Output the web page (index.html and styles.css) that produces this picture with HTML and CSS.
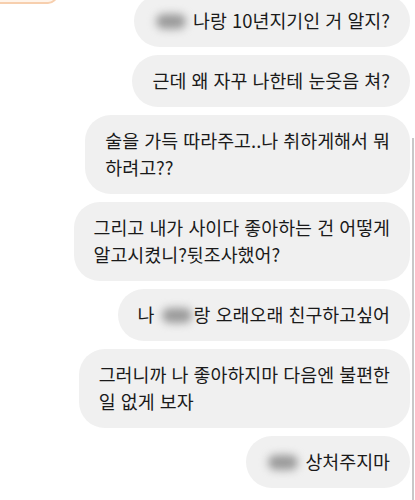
FILE: index.html
```html
<!DOCTYPE html>
<html lang="ko">
<head>
  <meta charset="UTF-8" />
  <meta name="viewport" content="width=device-width, initial-scale=1.0" />
  <title>대화</title>
  <link rel="stylesheet" href="styles.css">
</head>
<body>
  <div class="sticker"></div>
  <div class="scrollbar"></div>

  <main class="chat">
    <div class="bubble first"><span class="blur"></span> 나랑 10년지기인 거 알지?</div>
    <div class="bubble">근데 왜 자꾸 나한테 눈웃음 쳐?</div>
    <div class="bubble">술을 가득 따라주고..나 취하게해서 뭐<br>하려고??</div>
    <div class="bubble">그리고 내가 사이다 좋아하는 건 어떻게<br>알고시켰니?뒷조사했어?</div>
    <div class="bubble">나 <span class="blur"></span>랑 오래오래 친구하고싶어</div>
    <div class="bubble">그러니까 나 좋아하지마 다음엔 불편한<br>일 없게 보자</div>
    <div class="bubble"><span class="blur"></span> 상처주지마</div>
  </main>
</body>
</html>
```

FILE: styles.css
```css
body {
  font-family: "Noto Sans CJK KR", "Noto Sans", sans-serif;
  margin: 0;
  padding: 0;
  background: #fff;
  color: #1a1a1a;
  overflow: hidden;
}

.sticker {
  position: absolute;
  left: -10px;
  top: -30px;
  width: 64px;
  height: 30px;
  background: #fff4ea;
  border: 2px solid #f7cfae;
  border-radius: 10px;
}

.scrollbar {
  position: absolute;
  right: 1px;
  top: 138px;
  width: 2px;
  height: 362px;
  background: #c8c8c8;
}

.chat {
  display: flex;
  flex-direction: column;
  align-items: flex-end;
  gap: 8px;
  padding-right: 5px;
}

.bubble {
  background: #f0f0f0;
  border-radius: 26px;
  padding: 12px 20px 13px;
  font-size: 18.4px;
  line-height: 27px;
  white-space: nowrap;
}

.bubble.first {
  margin-top: -5px;
}

.blur {
  display: inline-block;
  width: 30px;
  height: 15px;
  margin: 0 2px;
  vertical-align: -1px;
  background: #9a9a9a;
  border-radius: 8px;
  filter: blur(4px);
}
```
